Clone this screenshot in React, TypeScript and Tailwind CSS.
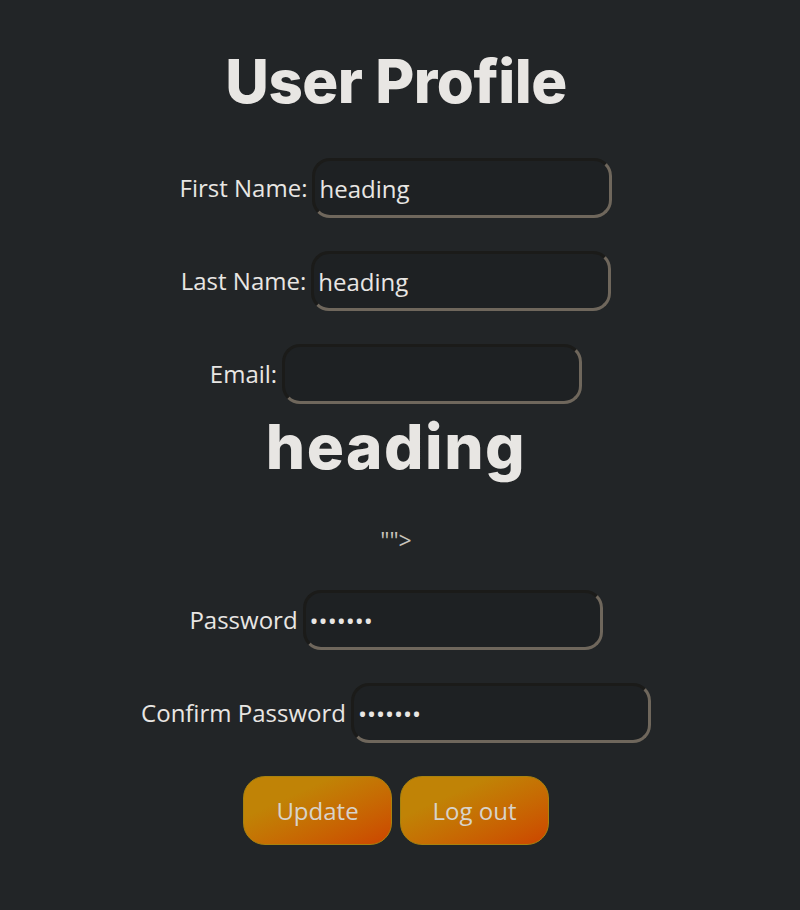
import React from 'react';

const field =
  'h-[60px] w-[300px] rounded-[18px] border-[3px] border-t-[#1b1b19] border-l-[#1b1b19] border-b-[#6f675c] border-r-[#6f675c] bg-[#1e2123] px-[4px] text-[24px] text-[#e8e6e3] outline-none';

function Row({ label, value, type = 'text' }: { label: string; value: string; type?: string }) {
  return (
    <div className="flex items-center justify-center">
      <label className="text-[24px] text-[#e8e6e3]">{label}</label>
      <input className={`${field} ml-[5px]`} type={type} defaultValue={value} readOnly />
    </div>
  );
}

export default function App() {
  return (
    <div className="min-h-[910px] bg-[#222527] pr-[8px] font-['Open_Sans',sans-serif] text-[#e8e6e3]">
      <div className="flex flex-col items-center pt-[41px]">
        <h1 className="font-['Inter',sans-serif] text-[60px] font-extrabold leading-[80px] tracking-[-0.5px]">User Profile</h1>
        <div className="mt-[37px] flex flex-col gap-[33px]">
          <Row label="First Name:" value="heading" />
          <Row label="Last Name:" value="heading" />
          <Row label="Email:" value="" />
        </div>
        <div className="mt-[3px] font-['Inter',sans-serif] text-[62px] font-extrabold leading-[80px] tracking-[1.5px]">heading</div>
        <div className="mt-[38px] text-[23px] leading-[30px] text-[#c8c3bc]">""&gt;</div>
        <div className="mt-[35px] flex flex-col gap-[33px]">
          <Row label="Password" value="1234567" type="password" />
          <Row label="Confirm Password" value="1234567" type="password" />
        </div>
        <div className="mt-[33px] flex gap-[8px]">
          {['Update', 'Log out'].map((t) => (
            <button
              key={t}
              className="h-[69px] w-[149px] rounded-[22px] border border-[#a8820e] bg-gradient-to-br from-[#c08306] from-30% to-[#cc4400] text-[24px] text-[#d8d3ca]"
            >
              {t}
            </button>
          ))}
        </div>
      </div>
    </div>
  );
}
